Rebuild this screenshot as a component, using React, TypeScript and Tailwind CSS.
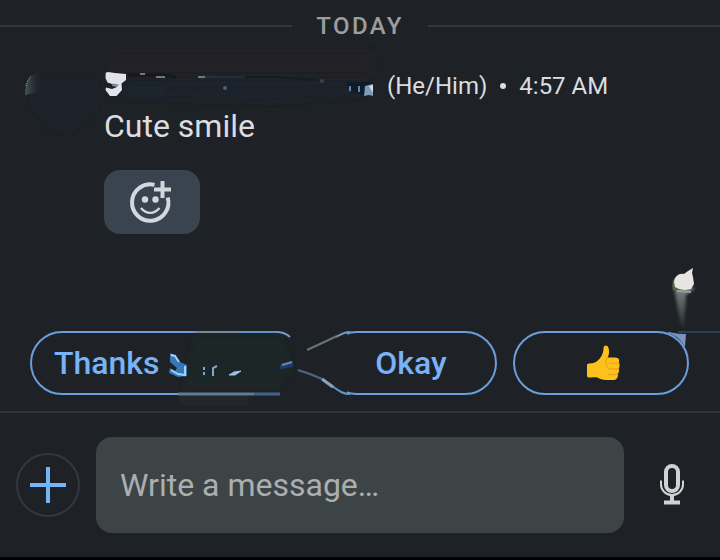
import { useState } from 'react';

export default function App() {
  const [draft, setDraft] = useState('');

  return (
    <div className="flex min-h-screen flex-col border-b-3 border-black bg-[#1e2226] font-[Roboto,sans-serif] text-[#dcdde0]">
      <main className="flex flex-1 flex-col pt-2.5">
        <div className="flex items-center gap-6">
          <span className="h-0.5 flex-1 bg-[#34383b]" />
          <h2 className="text-2xl font-medium tracking-widest text-[#9b9d9f]">TODAY</h2>
          <span className="h-0.5 flex-1 bg-[#34383b]" />
        </div>

        <article className="mt-7 flex px-6">
          <HiddenAvatar />
          <div className="min-w-0 flex-1">
            <header className="flex h-8 items-center gap-[13px] text-2xl whitespace-nowrap">
              <HiddenName />
              <span>(He/Him)</span>
              <span aria-hidden="true" className="size-1.5 rounded-full bg-[#dcdde0]" />
              <time>4:57 AM</time>
            </header>
            <p className="mt-1 text-[32px] leading-10">Cute smile</p>
            <button
              type="button"
              aria-label="Add a reaction"
              className="mt-6 flex h-16 w-24 items-center justify-center rounded-2xl bg-[#3a4350]"
            >
              <ReactionIcon />
            </button>
          </div>
        </article>

        <div className="mt-auto flex justify-end">
          <HiddenReceipt />
        </div>

        {/* Quick replies */}
        <div className="relative flex gap-4 pr-[31px] pb-4 pl-[30px]">
          <button
            type="button"
            className="h-16 flex-1 rounded-full border-2 border-[#6b9fdc] pl-[22px] text-left text-[32px] font-medium text-[#77b3f6]"
          >
            Thanks
          </button>
          <button
            type="button"
            className="h-16 w-43 rounded-full border-2 border-[#6b9fdc] text-[32px] font-medium text-[#77b3f6]"
          >
            Okay
          </button>
          <button
            type="button"
            aria-label="Thumbs up"
            className="flex h-16 w-44 items-center justify-center rounded-full border-2 border-[#6b9fdc]"
          >
            <ThumbIcon />
          </button>
          <ReplySmear />
          <CornerSmear />
        </div>
      </main>

      <footer className="flex items-center gap-4 border-t-2 border-[#303438] px-4 py-6">
        <button
          type="button"
          aria-label="Add attachment"
          className="flex size-16 items-center justify-center rounded-full border-2 border-[#34383b]"
        >
          <svg viewBox="0 0 36 36" className="size-9" fill="none" stroke="#72b5fb" strokeWidth="4">
            <path d="M18 0v36M0 18h36" />
          </svg>
        </button>
        <input
          type="text"
          aria-label="Write a message"
          placeholder="Write a message…"
          value={draft}
          onChange={(e) => setDraft(e.target.value)}
          className="h-24 min-w-0 flex-1 rounded-2xl bg-[#3d4445] px-6 text-[32px] outline-none placeholder:text-[#acafb0]"
        />
        <button
          type="button"
          aria-label="Record a voice message"
          className="flex size-16 items-center justify-center"
        >
          <MicIcon />
        </button>
      </footer>
    </div>
  );
}

// ── Icons ────────────────────────────────────────────────────────────────

function ReactionIcon() {
  return (
    <svg viewBox="0 0 48 48" className="size-12" fill="none" stroke="#d3d8df">
      <path d="M26.5 6.9A18.200 18.200 0 1 0 39.700 19.500" strokeWidth="4" />
      <path d="M34.500 3v17M26 11.500h17" strokeWidth="4" />
      <path d="M13 30c5.500 6.500 13 6.500 18.500 0" strokeWidth="2.400" />
      <circle cx="17" cy="21.500" r="3.200" fill="#d3d8df" stroke="none" />
      <circle cx="27.500" cy="21.500" r="3.200" fill="#d3d8df" stroke="none" />
    </svg>
  );
}

function MicIcon() {
  return (
    <svg viewBox="0 0 24 42" className="h-[42px] w-6" fill="none" stroke="#d0d2d4">
      <rect x="6" y="2" width="12" height="25" rx="6" strokeWidth="4" />
      <path d="M1 16.500v4a11 10.500 0 0 0 22 0v-4" strokeWidth="2" />
      <path d="M12 31v7" strokeWidth="4" />
      <path d="M4 38.500h16" strokeWidth="4" />
    </svg>
  );
}

function ThumbIcon() {
  return (
    <svg viewBox="-4 0 38 38" className="size-[38px]">
      <path
        d="M1 21C1 20 2 19.500 4 19.500c5 0 9-3 11.500-7.500 1.500-2.700 2-5 2-8 0-3 4-3.500 5 0 1 3.200.7 6-.7 9.500H29c4 0 5 3 3.500 5.500 1.500 1.500 1.500 4 0 5.500 1 1.700.7 4-.8 5.200 1 3-1 6.300-4.200 6.300H20c-4 0-6-1-8.500-2.500C9.500 33 7 33.500 3 33.500c-1.500 0-2-1-2-2z"
        fill="#fcc21b"
      />
      <path
        d="M21.500 13.500c-2.500 3-2.500 7 0 9.500M33 19.300H23.500M32.600 25H23M31.600 30.500H22.500"
        fill="none"
        stroke="#eda81c"
        strokeWidth="1.400"
        strokeLinecap="round"
      />
    </svg>
  );
}

// ── Smeared-out personal details ─────────────────────────────────────────

function HiddenAvatar() {
  return (
    <svg viewBox="0 2 80 72" className="h-[72px] w-20" role="img" aria-label="Sender picture, hidden">
      <defs>
        <filter id="avatar-soft" x="-30%" y="-30%" width="160%" height="160%">
          <feGaussianBlur stdDeviation="3" />
        </filter>
        <linearGradient id="avatar-edge">
          <stop offset="0" stopColor="#4b545d" />
          <stop offset="1" stopColor="#1e252d" stopOpacity="0" />
        </linearGradient>
      </defs>
      <path d="M10 12h60v32L44 64 24 58 10 36z" fill="#1d242a" filter="url(#avatar-soft)" />
      <path d="M1 26C1 17 5 9 12 5l6 1-4 18-12 3z" fill="url(#avatar-edge)" />
      <path d="M2 18c1-4 2-6 5-10" fill="none" stroke="#a9afb3" strokeDasharray="1 1" />
    </svg>
  );
}

function HiddenName() {
  return (
    <svg
      viewBox="0 2 270 32"
      className="h-8 w-[270px] shrink-0 overflow-visible"
      role="img"
      aria-label="Sender name, hidden"
    >
      <defs>
        <filter id="name-soft" x="-10%" y="-80%" width="120%" height="260%">
          <feGaussianBlur stdDeviation="3" />
        </filter>
        <filter id="name-spark" x="-20%" y="-20%" width="140%" height="140%">
          <feGaussianBlur stdDeviation="0.700" />
        </filter>
      </defs>
      <path d="M8-18h260V8H8z" fill="#202325" filter="url(#name-soft)" />
      <path d="M6 10h254v17l-84 7L8 30z" fill="#1a212a" filter="url(#name-soft)" />
      <path d="M26 16h34v12H20z" fill="#1a2a33" opacity=".5" filter="url(#name-soft)" />
      <g filter="url(#name-spark)">
        <path
          d="M1.700 4.700L4 4l7 1 11 1v6l-4.500 3.500.5 6.500-5.500 6H6l-4.500-6 .5-2.500 6 1.500 5-2-2-2-7.500-2.500-2-4.500z"
          fill="#e3e4e9"
        />
        <path d="M9 15.500l6 1-2 2.500-5-1z" fill="#7d8ca1" />
        <path d="M24 7h34l14 2" fill="none" stroke="#12181e" strokeWidth="3" />
        <path d="M112 9h60l40 3" fill="none" stroke="#151c23" strokeWidth="2" />
        <path d="M94 9h7M52 9h9M36 6h5" fill="none" stroke="#6d7a85" strokeWidth="2" />
        <path d="M101 9h40" fill="none" stroke="#35434f" />
        <circle cx="121" cy="20" r="2" fill="#45617c" />
        <circle cx="218" cy="13" r="2" fill="#304457" />
        <path d="M242 14h26l-3 14-8-2-12-4z" fill="#101b29" />
        <path d="M246 18v5M255 18v6" stroke="#6587a6" strokeWidth="2" />
        <path d="M261 18l8-2v12l-4-1-5 1z" fill="#7d9cb9" />
        <path d="M265 18l4-1v8z" fill="#d3e0ea" />
      </g>
    </svg>
  );
}

function HiddenReceipt() {
  return (
    <svg viewBox="0 0 56 72" className="h-[72px] w-14" role="img" aria-label="Read receipt picture, hidden">
      <defs>
        <filter id="receipt-soft" x="-40%" y="-20%" width="180%" height="140%">
          <feGaussianBlur stdDeviation="1.500" />
        </filter>
        <filter id="receipt-blob" x="-20%" y="-20%" width="140%" height="140%">
          <feGaussianBlur stdDeviation="0.700" />
        </filter>
        <linearGradient id="receipt-trail" x1="0" y1="0" x2="0" y2="1">
          <stop offset="0" stopColor="#7e8582" />
          <stop offset="1" stopColor="#23282b" />
        </linearGradient>
      </defs>
      <path d="M10 28l12-1 9 2-9 7-2 34-4-8z" fill="url(#receipt-trail)" filter="url(#receipt-soft)" />
      <g filter="url(#receipt-blob)">
        <path d="M9 31c-2-9 1-14 8-16l4 2-5 14z" fill="#4f6c3d" />
        <path
          d="M10 23c1-6 5-9 10-8l4-3 5-3-1 5 1 4 1 7-3 5-6 1-6-1-4-2z"
          fill="#e8e4e1"
        />
        <path d="M13 32l14 1" stroke="#9aa096" strokeWidth="2" />
      </g>
    </svg>
  );
}

function ReplySmear() {
  return (
    <svg
      viewBox="0 0 200 76"
      className="pointer-events-none absolute top-0 right-[360px] h-[76px] w-[200px]"
      aria-hidden="true"
    >
      <defs>
        <filter id="reply-soft" x="-10%" y="-20%" width="120%" height="140%">
          <feGaussianBlur stdDeviation="3" />
        </filter>
        <filter id="reply-spark" x="-10%" y="-10%" width="120%" height="120%">
          <feGaussianBlur stdDeviation="0.600" />
        </filter>
      </defs>
      <path d="M118-1h69v67h-69z" fill="#1e2226" />
      <path d="M36 5h84l12 30-14 24H24z" fill="#1c2628" filter="url(#reply-soft)" />
      <path d="M18 64h70v11H20z" fill="#222729" />
      <g filter="url(#reply-spark)" fill="none">
        <path d="M18 63h76" stroke="#607b91" strokeWidth="3" />
        <path d="M94 63h26" stroke="#41638a" strokeWidth="3" />
        <path d="M36 1h42" stroke="#798895" strokeWidth="2" />
        <path d="M116 1c7 0 11 2 14 5" stroke="#6c9acb" strokeWidth="2" />
        <path d="M190 1c-5 0-9 2-14 5" stroke="#719ac8" strokeWidth="2" />
        <path d="M177 5l-17 8-13 6" stroke="#66727d" strokeWidth="2" />
        <path d="M190 63c-8 0-12-4-18-8" stroke="#6795c5" strokeWidth="2" />
        <path d="M173 56l-11-8" stroke="#8ba3bc" strokeWidth="3" />
        <path d="M162 48l-12-5-12-4" stroke="#4d6684" strokeWidth="2" />
        <path d="M120 36l13-3" stroke="#1c3c68" strokeWidth="5" />
        <path d="M122 34l10-3" stroke="#7087ab" strokeWidth="2" />
        <path d="M10 22l5 2 5 7 7 3v11l-9 1-9-4 1-5 5 3 2-3-7-6z" fill="#3577b9" />
        <path d="M11 24l4 1 4 6M11 39l7 4 7 1V35" stroke="#a7cff2" strokeWidth="2" />
        <path d="M44 36v3M44 41v3M53 45v-8l4-2" stroke="#7da8cc" strokeWidth="2" />
        <path d="M69 44l5-3 7-1-6 4z" fill="#9bc0df" stroke="#9bc0df" />
      </g>
    </svg>
  );
}

function CornerSmear() {
  return (
    <svg
      viewBox="0 0 56 20"
      className="pointer-events-none absolute top-0 right-0 h-5 w-14"
      aria-hidden="true"
    >
      <path d="M4 1c6 1 10 2 18 2l-1 13-5-7C12 5 8 3 4 2z" fill="#7894bf" />
      <path d="M14 1h42" stroke="#2b3e59" strokeWidth="2" />
    </svg>
  );
}
